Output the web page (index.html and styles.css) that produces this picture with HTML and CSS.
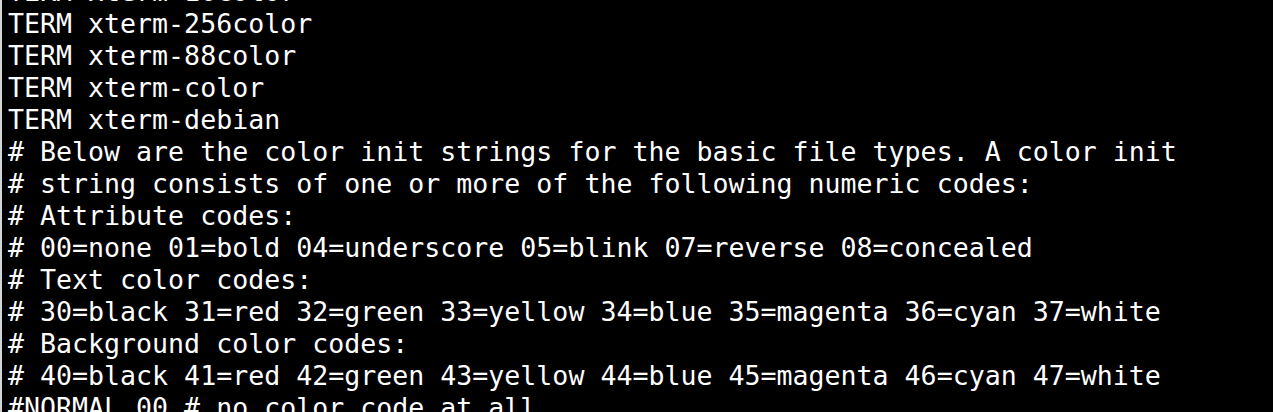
FILE: index.html
```html
<!DOCTYPE html>
<html>
<head>
<meta charset="utf-8">
<link rel="stylesheet" href="styles.css">
</head>
<body>
<div class="term">
<pre class="out">TERM xterm-16color
TERM xterm-256color
TERM xterm-88color
TERM xterm-color
TERM xterm-debian
# Below are the color init strings for the basic file types. A color init
# string consists of one or more of the following numeric codes:
# Attribute codes:
# 00=none 01=bold 04=underscore 05=blink 07=reverse 08=concealed
# Text color codes:
# 30=black 31=red 32=green 33=yellow 34=blue 35=magenta 36=cyan 37=white
# Background color codes:
# 40=black 41=red 42=green 43=yellow 44=blue 45=magenta 46=cyan 47=white
#NORMAL 00 # no color code at all</pre>
</div>
</body>
</html>
```
FILE: styles.css
```css
html, body {
  margin: 0;
  padding: 0;
  background: #000;
  height: 100%;
  overflow: hidden;
}
.term {
  height: 100%;
  border-left: 2px solid #d4d4d4;
  padding-left: 6px;
  background: #000;
  overflow: hidden;
}
.out {
  margin: -24px 0 0 0;
  font-family: "DejaVu Sans Mono", monospace;
  font-size: 26.6px;
  line-height: 32px;
  color: #fff;
  white-space: pre;
}
```
